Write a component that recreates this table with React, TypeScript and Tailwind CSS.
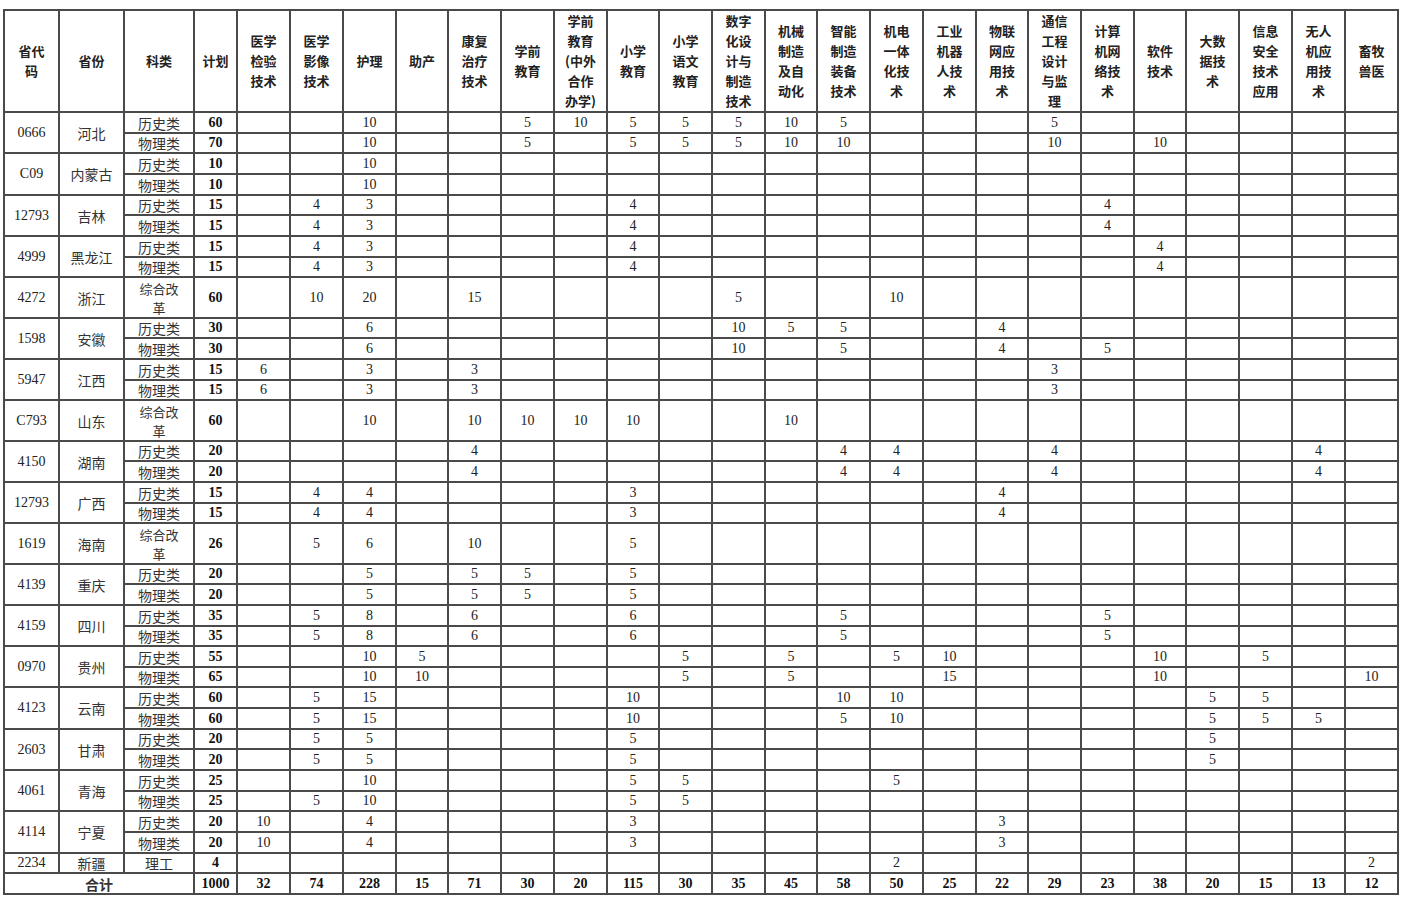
import React from "react"

const majors: string[][] = [
  ["医学", "检验", "技术"],
  ["医学", "影像", "技术"],
  ["护理"],
  ["助产"],
  ["康复", "治疗", "技术"],
  ["学前", "教育"],
  ["学前", "教育", "(中外", "合作", "办学)"],
  ["小学", "教育"],
  ["小学", "语文", "教育"],
  ["数字", "化设", "计与", "制造", "技术"],
  ["机械", "制造", "及自", "动化"],
  ["智能", "制造", "装备", "技术"],
  ["机电", "一体", "化技", "术"],
  ["工业", "机器", "人技", "术"],
  ["物联", "网应", "用技", "术"],
  ["通信", "工程", "设计", "与监", "理"],
  ["计算", "机网", "络技", "术"],
  ["软件", "技术"],
  ["大数", "据技", "术"],
  ["信息", "安全", "技术", "应用"],
  ["无人", "机应", "用技", "术"],
  ["畜牧", "兽医"],
]

const colWidths = [55, 65, 70, 43, 53, 53, 53, 52, 53, 53, 53, 52, 53, 53, 52, 53, 53, 53, 52, 53, 53, 52, 53, 53, 53, 53]

type Sub = { kind: string[]; plan: number; v: Record<number, number> }
type Prov = { code: string; name: string; subs: Sub[]; merged?: boolean }

const H = ["历史类"]
const P = ["物理类"]
const Z = ["综合改", "革"]

const provinces: Prov[] = [
  {
    code: "0666",
    name: "河北",
    subs: [
      { kind: H, plan: 60, v: { 2: 10, 5: 5, 6: 10, 7: 5, 8: 5, 9: 5, 10: 10, 11: 5, 15: 5 } },
      { kind: P, plan: 70, v: { 2: 10, 5: 5, 7: 5, 8: 5, 9: 5, 10: 10, 11: 10, 15: 10, 17: 10 } },
    ],
  },
  {
    code: "C09",
    name: "内蒙古",
    subs: [
      { kind: H, plan: 10, v: { 2: 10 } },
      { kind: P, plan: 10, v: { 2: 10 } },
    ],
  },
  {
    code: "12793",
    name: "吉林",
    subs: [
      { kind: H, plan: 15, v: { 1: 4, 2: 3, 7: 4, 16: 4 } },
      { kind: P, plan: 15, v: { 1: 4, 2: 3, 7: 4, 16: 4 } },
    ],
  },
  {
    code: "4999",
    name: "黑龙江",
    subs: [
      { kind: H, plan: 15, v: { 1: 4, 2: 3, 7: 4, 17: 4 } },
      { kind: P, plan: 15, v: { 1: 4, 2: 3, 7: 4, 17: 4 } },
    ],
  },
  {
    code: "4272",
    name: "浙江",
    merged: true,
    subs: [{ kind: Z, plan: 60, v: { 1: 10, 2: 20, 4: 15, 9: 5, 12: 10 } }],
  },
  {
    code: "1598",
    name: "安徽",
    subs: [
      { kind: H, plan: 30, v: { 2: 6, 9: 10, 10: 5, 11: 5, 14: 4 } },
      { kind: P, plan: 30, v: { 2: 6, 9: 10, 11: 5, 14: 4, 16: 5 } },
    ],
  },
  {
    code: "5947",
    name: "江西",
    subs: [
      { kind: H, plan: 15, v: { 0: 6, 2: 3, 4: 3, 15: 3 } },
      { kind: P, plan: 15, v: { 0: 6, 2: 3, 4: 3, 15: 3 } },
    ],
  },
  {
    code: "C793",
    name: "山东",
    merged: true,
    subs: [{ kind: Z, plan: 60, v: { 2: 10, 4: 10, 5: 10, 6: 10, 7: 10, 10: 10 } }],
  },
  {
    code: "4150",
    name: "湖南",
    subs: [
      { kind: H, plan: 20, v: { 4: 4, 11: 4, 12: 4, 15: 4, 20: 4 } },
      { kind: P, plan: 20, v: { 4: 4, 11: 4, 12: 4, 15: 4, 20: 4 } },
    ],
  },
  {
    code: "12793",
    name: "广西",
    subs: [
      { kind: H, plan: 15, v: { 1: 4, 2: 4, 7: 3, 14: 4 } },
      { kind: P, plan: 15, v: { 1: 4, 2: 4, 7: 3, 14: 4 } },
    ],
  },
  {
    code: "1619",
    name: "海南",
    merged: true,
    subs: [{ kind: Z, plan: 26, v: { 1: 5, 2: 6, 4: 10, 7: 5 } }],
  },
  {
    code: "4139",
    name: "重庆",
    subs: [
      { kind: H, plan: 20, v: { 2: 5, 4: 5, 5: 5, 7: 5 } },
      { kind: P, plan: 20, v: { 2: 5, 4: 5, 5: 5, 7: 5 } },
    ],
  },
  {
    code: "4159",
    name: "四川",
    subs: [
      { kind: H, plan: 35, v: { 1: 5, 2: 8, 4: 6, 7: 6, 11: 5, 16: 5 } },
      { kind: P, plan: 35, v: { 1: 5, 2: 8, 4: 6, 7: 6, 11: 5, 16: 5 } },
    ],
  },
  {
    code: "0970",
    name: "贵州",
    subs: [
      { kind: H, plan: 55, v: { 2: 10, 3: 5, 8: 5, 10: 5, 12: 5, 13: 10, 17: 10, 19: 5 } },
      { kind: P, plan: 65, v: { 2: 10, 3: 10, 8: 5, 10: 5, 13: 15, 17: 10, 21: 10 } },
    ],
  },
  {
    code: "4123",
    name: "云南",
    subs: [
      { kind: H, plan: 60, v: { 1: 5, 2: 15, 7: 10, 11: 10, 12: 10, 18: 5, 19: 5 } },
      { kind: P, plan: 60, v: { 1: 5, 2: 15, 7: 10, 11: 5, 12: 10, 18: 5, 19: 5, 20: 5 } },
    ],
  },
  {
    code: "2603",
    name: "甘肃",
    subs: [
      { kind: H, plan: 20, v: { 1: 5, 2: 5, 7: 5, 18: 5 } },
      { kind: P, plan: 20, v: { 1: 5, 2: 5, 7: 5, 18: 5 } },
    ],
  },
  {
    code: "4061",
    name: "青海",
    subs: [
      { kind: H, plan: 25, v: { 2: 10, 7: 5, 8: 5, 12: 5 } },
      { kind: P, plan: 25, v: { 1: 5, 2: 10, 7: 5, 8: 5 } },
    ],
  },
  {
    code: "4114",
    name: "宁夏",
    subs: [
      { kind: H, plan: 20, v: { 0: 10, 2: 4, 7: 3, 14: 3 } },
      { kind: P, plan: 20, v: { 0: 10, 2: 4, 7: 3, 14: 3 } },
    ],
  },
  {
    code: "2234",
    name: "新疆",
    subs: [{ kind: ["理工"], plan: 4, v: { 12: 2, 21: 2 } }],
  },
]

const totals = [32, 74, 228, 15, 71, 30, 20, 115, 30, 35, 45, 58, 50, 25, 22, 29, 23, 38, 20, 15, 13, 12]

// row boundaries follow a 20.66px pitch below the header
const rowH = (r: number, span: number) =>
  Math.round(111 + (r + span) * 20.66) - Math.round(111 + r * 20.66)

const hClass = (h: number) =>
  h >= 41 ? "h-[41px]" : h === 40 ? "h-[40px]" : h === 21 ? "h-[21px]" : "h-[20px]"

const cell = "border-2 border-[#4a4a4a] p-0 text-center align-middle"
const num = "font-['Liberation_Serif',serif] text-[14px] leading-none"
const cjk = "font-['Noto_Sans_CJK_SC',sans-serif] text-[14px] leading-[16px] text-[#333]"

export default function App() {
  let r = 0
  const body: React.ReactNode[] = []

  provinces.forEach((p) => {
    p.subs.forEach((s, i) => {
      const span = p.merged ? 2 : 1
      const h = rowH(r, span)
      r += span
      body.push(
        <tr key={`${p.name}-${i}`} className={hClass(h)}>
          {i === 0 && (
            <>
              <td rowSpan={p.subs.length} className={`${cell} ${num} text-[#222]`}>
                {p.code}
              </td>
              <td rowSpan={p.subs.length} className={`${cell} ${cjk}`}>
                {p.name}
              </td>
            </>
          )}
          <td className={`${cell} ${cjk}`}>
            {s.kind.length > 1 ? (
              <div className="flex flex-col items-center text-[13px] leading-[19px]">
                {s.kind.map((k, j) => (
                  <span key={j} className="block h-[19px]">
                    {k}
                  </span>
                ))}
              </div>
            ) : (
              s.kind[0]
            )}
          </td>
          <td className={`${cell} ${num} font-bold text-[#111]`}>{s.plan}</td>
          {majors.map((_, c) => (
            <td key={c} className={`${cell} ${num} text-[#222]`}>
              {s.v[c] ?? ""}
            </td>
          ))}
        </tr>
      )
    })
  })

  return (
    <div className="w-[1404px] h-[902px] bg-white pt-[9px] pl-[3px] overflow-hidden">
      <table className="border-collapse table-fixed w-[1394px]">
        <colgroup>
          {colWidths.map((w, i) => (
            <col key={i} style={{ width: w }} />
          ))}
        </colgroup>
        <thead>
          <tr className="h-[100px] font-['Noto_Sans_CJK_SC',sans-serif] text-[13px] leading-[20px] font-bold text-[#222]">
            <th className={cell}>
              省代
              <br />码
            </th>
            <th className={cell}>省份</th>
            <th className={cell}>科类</th>
            <th className={cell}>计划</th>
            {majors.map((m, i) => (
              <th key={i} className={cell}>
                {m.map((line, j) => (
                  <div key={j}>{line}</div>
                ))}
              </th>
            ))}
          </tr>
        </thead>
        <tbody>
          {body}
          <tr className="h-[21px]">
            <td colSpan={3} className={`${cell} ${cjk} font-bold`}>
              合计
            </td>
            <td className={`${cell} ${num} font-bold text-[#111]`}>1000</td>
            {totals.map((t, i) => (
              <td key={i} className={`${cell} ${num} font-bold text-[#111]`}>
                {t}
              </td>
            ))}
          </tr>
        </tbody>
      </table>
    </div>
  )
}
